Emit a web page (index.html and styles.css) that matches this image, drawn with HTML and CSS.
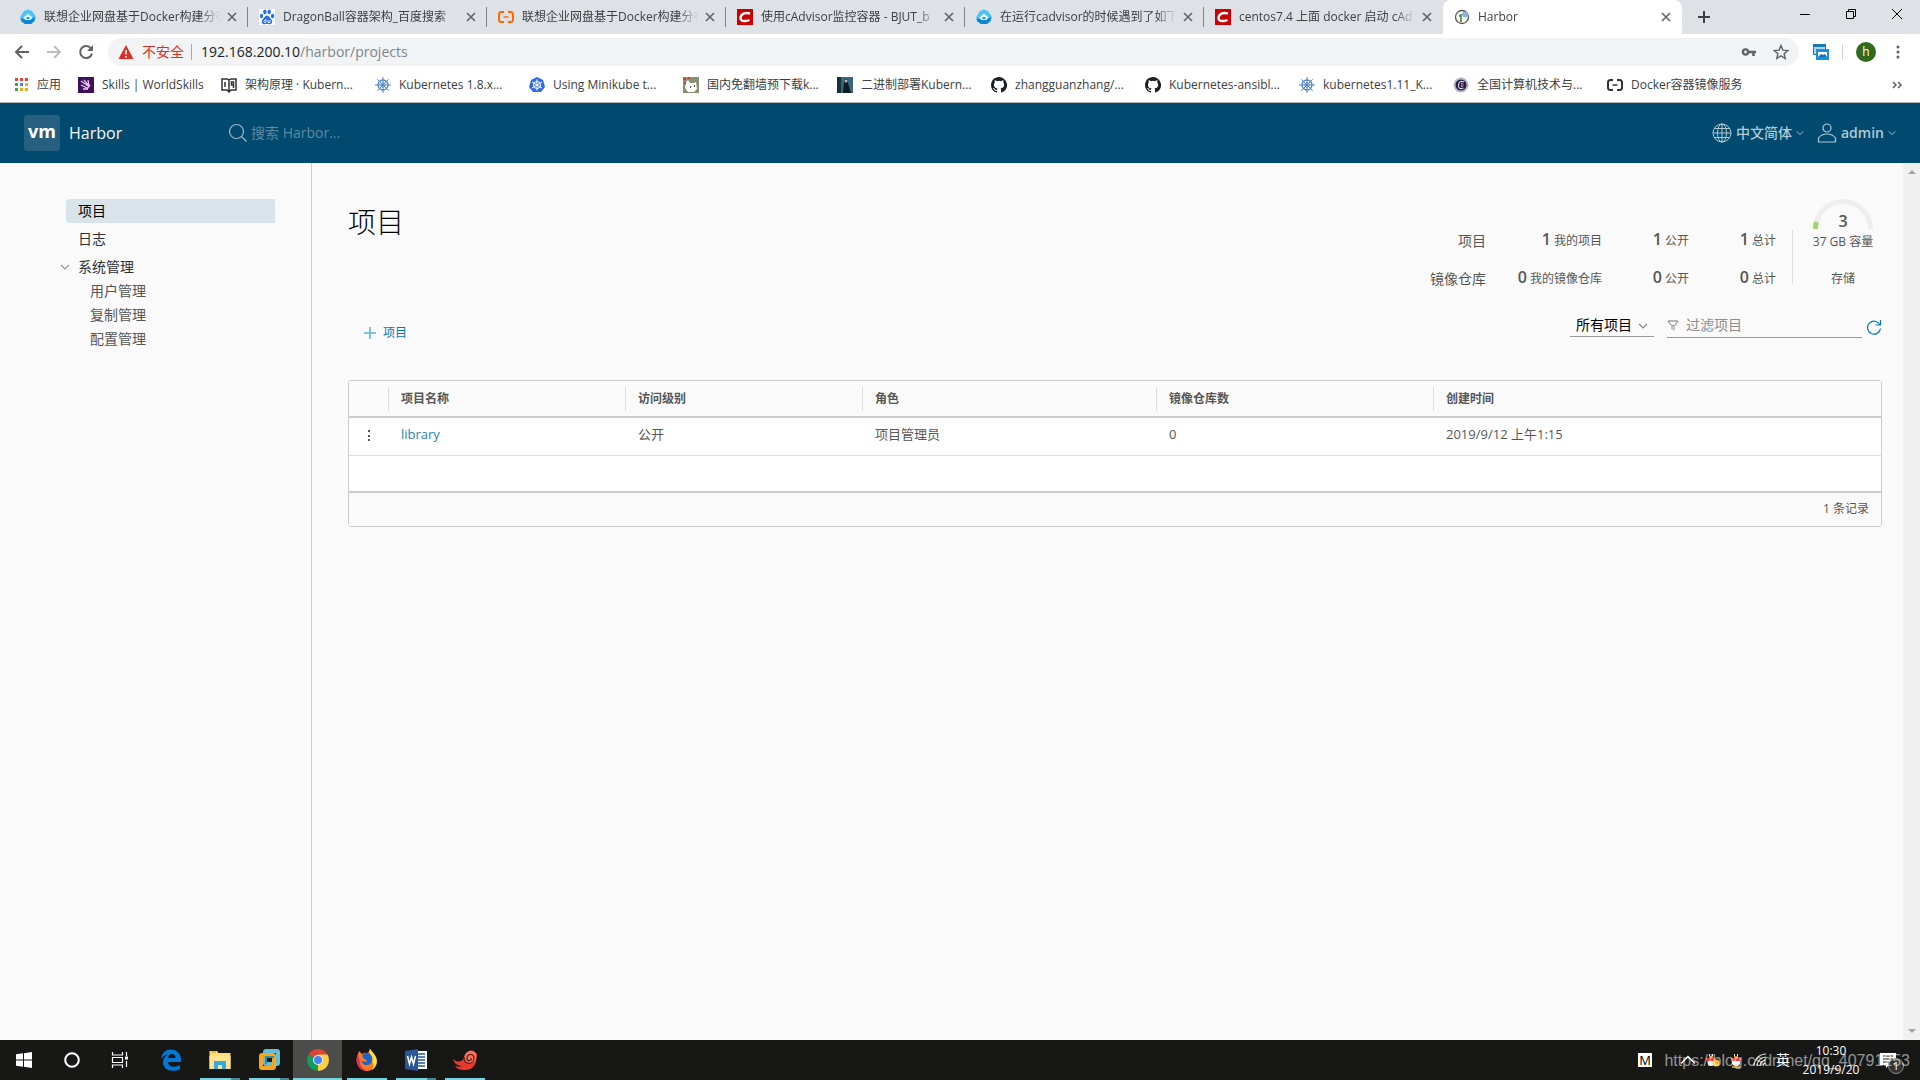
FILE: index.html
```html
<!DOCTYPE html>
<html lang="zh-CN">
<head>
<meta charset="utf-8">
<title>Harbor</title>
<link rel="stylesheet" href="styles.css">
</head>
<body>
<svg class="defs" aria-hidden="true">
  <symbol id="close" viewBox="0 0 16 16"><path d="M4 4l8 8M12 4l-8 8" stroke="#5f6368" stroke-width="1.6" fill="none"/></symbol>
  <symbol id="cloud" viewBox="0 0 16 16"><path d="M8 .5l4 1.500 3.500 5-.5 4-4 4H5l-4-3-.5-4.500L4 2z" fill="#4cc3f2"/><path d="M.5 9q7 3 15-1l-1 4-3.500 3H5l-4-3z" fill="#1286d4"/><path d="M3.500 8.500L8 4.500l4.500 4-2 2.500h-5z" fill="#e4f7ff"/><path d="M6.500 8h3v2h-3z" fill="#1c9be0"/></symbol>
  <symbol id="ali" viewBox="0 0 16 16"><path d="M6 3H3.500Q1 3 1 5.500v5Q1 13 3.500 13H6M10 3h2.500Q15 3 15 5.500v5Q15 13 12.500 13H10" fill="none" stroke="currentColor" stroke-width="2"/><path d="M5.500 8h5" stroke="currentColor" stroke-width="1.500"/></symbol>
  <symbol id="csdn" viewBox="0 0 16 16"><path d="M0 0h16v16H0z" fill="#c00"/><path d="M13 4.500Q10 3.500 7 4.300 3.700 5.500 3.500 9q.2 3.300 4.500 3 2.500 0 4.500-1" fill="none" stroke="#fff" stroke-width="2.400"/></symbol>
  <symbol id="github" viewBox="0 0 16 16"><path fill="#1b1f23" d="M8 0C3.580 0 0 3.580 0 8c0 3.540 2.290 6.530 5.470 7.590.4.070.55-.17.55-.38v-1.490c-2.010.37-2.690-.49-2.690-.94-.09-.23-.48-.94-.82-1.130-.28-.15-.68-.52-.01-.53.63-.01 1.080.58 1.230.82.72 1.210 1.870.87 2.330.66.070-.52.28-.87.51-1.070-1.780-.2-3.640-.89-3.640-3.950 0-.87.31-1.590.82-2.150-.08-.2-.36-1.020.08-2.120 0 0 .67-.21 2.200.82a7.400 7.400 0 0 1 4 0c1.530-1.040 2.200-.82 2.200-.82.44 1.100.16 1.920.08 2.120.51.56.82 1.270.82 2.150 0 3.070-1.870 3.750-3.650 3.950.29.25.54.73.54 1.480v2.200c0 .21.15.46.55.38A8 8 0 0 0 8 0z"/></symbol>
  <symbol id="wheel" viewBox="0 0 16 16"><g fill="none" stroke="#5585c7"><circle cx="8" cy="8" r="5" stroke-width="1.400"/><circle cx="8" cy="8" r="2.200"/><path d="M8 0v16M0 8h16M2.300 2.300l11.400 11.400M13.700 2.300L2.300 13.700"/></g></symbol>
  <symbol id="chev" viewBox="0 0 10 10"><path d="M1 3l4 4 4-4" fill="none" stroke="currentColor" stroke-width="1.200"/></symbol>
</svg>

<header class="browser">
  <nav class="tabs" aria-label="标签页">
    <div class="tab"><svg class="ico"><use href="#cloud"/></svg><span class="tab-title">联想企业网盘基于Docker构建分布</span><button class="tab-close" aria-label="关闭"><svg class="ico"><use href="#close"/></svg></button></div>
    <div class="tab"><svg class="ico" viewBox="0 0 16 16"><path d="M0 0h16v16H0z" fill="#fff"/><g fill="#2a73e8"><ellipse cx="2.500" cy="7" rx="1.700" ry="2.300"/><ellipse cx="5.900" cy="3" rx="1.700" ry="2.400"/><ellipse cx="10.200" cy="3" rx="1.700" ry="2.400"/><ellipse cx="13.600" cy="7" rx="1.700" ry="2.300"/><path d="M8 6.500c2 0 2.500 2 4 3.500 2.500 2.500 1 5.500-1.500 5.300-2-.3-3-.3-5 0C3 15.500 1.500 12.500 4 10c1.500-1.500 2-3.500 4-3.500z"/></g><path d="M6.800 10v3.500H5.500q-1-1 0-2h1.300M9 11v2.500h2V11" fill="none" stroke="#fff" stroke-width=".8"/></svg><span class="tab-title">DragonBall容器架构_百度搜索</span><button class="tab-close" aria-label="关闭"><svg class="ico"><use href="#close"/></svg></button></div>
    <div class="tab"><svg class="ico orange"><use href="#ali"/></svg><span class="tab-title">联想企业网盘基于Docker构建分布</span><button class="tab-close" aria-label="关闭"><svg class="ico"><use href="#close"/></svg></button></div>
    <div class="tab"><svg class="ico"><use href="#csdn"/></svg><span class="tab-title">使用cAdvisor监控容器 - BJUT_b</span><button class="tab-close" aria-label="关闭"><svg class="ico"><use href="#close"/></svg></button></div>
    <div class="tab"><svg class="ico"><use href="#cloud"/></svg><span class="tab-title">在运行cadvisor的时候遇到了如下</span><button class="tab-close" aria-label="关闭"><svg class="ico"><use href="#close"/></svg></button></div>
    <div class="tab last"><svg class="ico"><use href="#csdn"/></svg><span class="tab-title">centos7.4 上面 docker 启动 cAd</span><button class="tab-close" aria-label="关闭"><svg class="ico"><use href="#close"/></svg></button></div>
    <div class="tab active"><svg class="ico" viewBox="0 0 16 16"><circle cx="8" cy="8" r="6.500" fill="#fff" stroke="#555" stroke-width="1.300"/><path d="M5 7h2v6M7 5v1" fill="none" stroke="#5a9a3c" stroke-width="1.800"/><circle cx="11" cy="5.500" r="3" fill="#8db4de"/></svg><span class="tab-title">Harbor</span><button class="tab-close" aria-label="关闭"><svg class="ico"><use href="#close"/></svg></button></div>
    <button class="new-tab" aria-label="新标签页"><svg class="ico" viewBox="0 0 16 16"><path d="M8 2v12M2 8h12" stroke="#3c4043" stroke-width="2"/></svg></button>
    <div class="window-controls">
      <button aria-label="最小化"><svg class="ico" viewBox="0 0 16 16"><path d="M3 8.500h10" stroke="#000"/></svg></button>
      <button aria-label="还原"><svg class="ico" viewBox="0 0 16 16"><path d="M3.500 5.500h7v7h-7zM5.500 5.500v-2h7v7h-2" fill="none" stroke="#000"/></svg></button>
      <button aria-label="关闭窗口"><svg class="ico" viewBox="0 0 16 16"><path d="M3 3l10 10M13 3L3 13" stroke="#000"/></svg></button>
    </div>
  </nav>

  <div class="toolbar">
    <button aria-label="后退"><svg class="ico" viewBox="0 0 16 16"><path d="M15 8H2M8 2L2 8l6 6" fill="none" stroke="#5f6368" stroke-width="2"/></svg></button>
    <button aria-label="前进"><svg class="ico" viewBox="0 0 16 16"><path d="M1 8h13M8 2l6 6-6 6" fill="none" stroke="#babcbe" stroke-width="2"/></svg></button>
    <button aria-label="刷新"><svg class="ico" viewBox="0 0 16 16"><path d="M13 4.500A6 6 0 1 0 14 9.500" fill="none" stroke="#5f6368" stroke-width="2"/><path d="M15 1v6H9z" fill="#5f6368"/></svg></button>
    <div class="omnibox">
      <svg class="ico" viewBox="0 0 16 16"><path d="M8 1l7.500 14H.5z" fill="#d93025"/><path d="M8 6v4.500M8 12v1.500" stroke="#fff" stroke-width="1.500"/></svg>
      <span class="unsafe">不安全</span>
      <span class="url">192.168.200.10<i>/harbor/projects</i></span>
      <button aria-label="密码"><svg class="ico" viewBox="0 0 16 16"><circle cx="4.500" cy="8" r="2.600" fill="none" stroke="#5f6368" stroke-width="2.400"/><path d="M8 8h7M12.500 8v4" stroke="#5f6368" stroke-width="2.600"/></svg></button>
      <button aria-label="收藏"><svg class="ico" viewBox="0 0 16 16"><path d="M8 1.500l1.900 4.600 4.900.4-3.700 3.200 1.100 4.800L8 11.900l-4.200 2.600 1.100-4.800-3.700-3.200 4.900-.4z" fill="none" stroke="#5f6368" stroke-width="1.400"/></svg></button>
    </div>
    <button class="extension" aria-label="扩展程序"><svg class="ico" viewBox="0 0 16 16"><path d="M0 0h13v11H0z" fill="#1b77b7"/><path d="M1 3h11v7H1z" fill="#a9d6ef"/><path d="M3 5h13v11H3z" fill="#1792dc"/><path d="M5 8h9v5H5z" fill="#fff"/><path d="M5 13l3-3 2 1 2-1 2 3z" fill="#0874bd"/></svg></button>
    <button class="avatar" aria-label="用户">h</button>
    <button aria-label="菜单"><svg class="ico" viewBox="0 0 16 16"><g fill="#5f6368"><circle cx="8" cy="3" r="1.500"/><circle cx="8" cy="8" r="1.500"/><circle cx="8" cy="13" r="1.500"/></g></svg></button>
  </div>

  <nav class="bookmarks" aria-label="书签">
    <a href="#" class="apps"><svg class="ico" viewBox="0 0 16 16"><path d="M2 1h3v3H2zM7 1h3v3H7zM12 1h3v3h-3z" fill="#ea4335"/><path d="M2 6h3v3H2zM2 11h3v3H2z" fill="#34a853"/><path d="M7 6h3v3H7z" fill="#4285f4"/><path d="M12 6h3v3h-3zM7 11h3v3H7zM12 11h3v3h-3z" fill="#f9ab00"/></svg><span>应用</span></a>
    <a href="#" class="skills"><svg class="ico" viewBox="0 0 16 16"><path d="M0 0h16v16H0z" fill="#40105c"/><path d="M3 4l7 5M6 3l5 6M10 3l1 6M3 8l6 3M12 8l-3 4M5 12l5 0" stroke="#e7c9f0" stroke-width="1.300"/></svg><span>Skills | WorldSkills</span></a>
    <a href="#"><svg class="ico" viewBox="0 0 16 16"><path d="M1 2h5l2 1 2-1h5v11h-5l-2 2-2-2H1zM8 3v11M4 5v5M10.500 5h2v3h-2zM12.500 8v3" fill="none" stroke="#333" stroke-width="1.500"/></svg><span>架构原理 · Kubern...</span></a>
    <a href="#"><svg class="ico"><use href="#wheel"/></svg><span>Kubernetes 1.8.x...</span></a>
    <a href="#"><svg class="ico" viewBox="0 0 16 16"><path d="M8 0l6 3 2 7-4 5H4L0 10l2-7z" fill="#326ce5"/><g fill="none" stroke="#fff"><circle cx="8" cy="8" r="3.500"/><path d="M8 2.500v11M3 5l10 6M13 5L3 11"/></g></svg><span>Using Minikube t...</span></a>
    <a href="#"><svg class="ico" viewBox="0 0 16 16"><path d="M0 0h16v16H0z" fill="#8a8f73"/><path d="M3 5l2-2 2 3h4l2-1 1 7-3 3H5l-3-4z" fill="#fff"/><path d="M0 1h3v2H0zM5 0h2v2H5zM1 5h2v2H1z" fill="#d2383b"/><path d="M7 10h1M11 9h1" stroke="#322" stroke-width="1.500"/></svg><span>国内免翻墙预下载k...</span></a>
    <a href="#"><svg class="ico" viewBox="0 0 16 16"><path d="M0 0h16v16H0z" fill="#38677c"/><path d="M0 0h4v16H0z" fill="#16323f"/><path d="M6 16L7 6l1-4h2l1 4 3 10z" fill="#101c25"/><circle cx="9" cy="4" r="1.500" fill="#c9b3a0"/></svg><span>二进制部署Kubern...</span></a>
    <a href="#"><svg class="ico"><use href="#github"/></svg><span>zhangguanzhang/...</span></a>
    <a href="#"><svg class="ico"><use href="#github"/></svg><span>Kubernetes-ansibl...</span></a>
    <a href="#"><svg class="ico"><use href="#wheel"/></svg><span>kubernetes1.11_K...</span></a>
    <a href="#"><svg class="ico" viewBox="0 0 16 16"><circle cx="8" cy="8" r="7.500" fill="#b9b8c8"/><circle cx="8" cy="8" r="5.500" fill="#242147"/><path d="M11 5Q6 3 5.500 8t5 3M9 6v4" fill="none" stroke="#d4d3e2" stroke-width="1.200"/><path d="M9 7h2v2H9z" fill="#b33"/></svg><span>全国计算机技术与...</span></a>
    <a href="#"><svg class="ico dark"><use href="#ali"/></svg><span>Docker容器镜像服务</span></a>
    <button class="more" aria-label="更多书签"><svg class="ico" viewBox="0 0 16 16"><path d="M4 5l3 3-3 3M9 5l3 3-3 3" fill="none" stroke="#5f6368" stroke-width="1.600"/></svg></button>
  </nav>
</header>

<header class="app-header">
  <a href="#" class="brand"><span class="logo">vm</span><span>Harbor</span></a>
  <label class="search"><svg class="ico20" viewBox="0 0 20 20"><g fill="none" stroke="#99b7c6" stroke-width="1.200"><circle cx="8.500" cy="8.500" r="7"/><path d="M13.500 13.500l5 5"/></g></svg><input type="text" placeholder="搜索 Harbor..." aria-label="搜索"></label>
  <button class="head-menu"><svg class="ico20" viewBox="0 0 20 20"><g fill="none" stroke="currentColor"><circle cx="10" cy="10" r="9"/><ellipse cx="10" cy="10" rx="4.500" ry="9"/><path d="M10 1v18M1 10h18M2.500 5.500h15M2.500 14.500h15"/></g></svg><span class="medium">中文简体</span><svg class="caret"><use href="#chev"/></svg></button>
  <button class="head-menu"><svg class="ico20" viewBox="0 0 20 20"><g fill="none" stroke="currentColor" stroke-width="1.200"><circle cx="10" cy="5" r="4"/><path d="M1.500 19v-4q3-4 8.500-4t8.500 4v4z"/></g></svg><span>admin</span><svg class="caret"><use href="#chev"/></svg></button>
</header>

<div class="workspace">
  <nav class="side">
    <a href="#" class="side-link current">项目</a>
    <a href="#" class="side-link">日志</a>
    <button class="side-group"><svg class="caret"><use href="#chev"/></svg>系统管理</button>
    <a href="#" class="side-sub">用户管理</a>
    <a href="#" class="side-sub">复制管理</a>
    <a href="#" class="side-sub">配置管理</a>
  </nav>

  <main class="content">
    <div class="overview">
      <h1>项目</h1>
      <dl class="stats">
        <dt>项目</dt><dd><b>1</b> 我的项目</dd><dd><b>1</b> 公开</dd><dd><b>1</b> 总计</dd>
        <dt>镜像仓库</dt><dd><b>0</b> 我的镜像仓库</dd><dd><b>0</b> 公开</dd><dd><b>0</b> 总计</dd>
      </dl>
      <div class="divider"></div>
      <div class="storage">
        <div class="gauge"><svg viewBox="0 0 60 30"><path d="M2.500 30a27.500 27.500 0 0 1 55 0" fill="none" stroke="#eee" stroke-width="5"/><path d="M2.500 30q0-4 1-7" fill="none" stroke="#a5d46f" stroke-width="5"/></svg><b>3</b></div>
        <span>37 GB 容量</span>
        <span class="storage-name">存储</span>
      </div>
    </div>

    <div class="actions">
      <button class="create"><svg class="plus" viewBox="0 0 12 12"><path d="M6 0v12M0 6h12" stroke="#5fb0d8" stroke-width="1.500"/></svg>项目</button>
      <div class="select-wrap"><select aria-label="项目类型"><option>所有项目</option></select><svg class="caret"><use href="#chev"/></svg></div>
      <label class="filter"><svg class="funnel" viewBox="0 0 12 12"><path d="M1 2h10L7.500 6.500h-3z" fill="none" stroke="#777"/><path d="M4 6.500h4v5H6.500L4 10z" fill="#c4c4c4"/></svg><input type="text" placeholder="过滤项目" aria-label="过滤项目"></label>
      <button class="refresh" aria-label="刷新"><svg class="ico" viewBox="0 0 16 16"><path d="M14 6A6.500 6.500 0 1 0 14.500 9.500M14.500 1v5h-5" fill="none" stroke="#0079b8" stroke-width="1.200"/></svg></button>
    </div>

    <div class="grid">
      <table>
        <colgroup><col class="c-menu"><col class="c-name"><col class="c-access"><col class="c-role"><col class="c-repos"><col></colgroup>
        <thead><tr><th aria-label="操作"></th><th><span>项目名称</span></th><th><span>访问级别</span></th><th><span>角色</span></th><th><span>镜像仓库数</span></th><th><span>创建时间</span></th></tr></thead>
        <tbody><tr><td><button class="row-menu" aria-label="操作"><svg class="ico" viewBox="0 0 16 16"><path d="M6 4h2v2H6zM6 9h2v2H6zM6 13h2v2H6z" fill="#565656"/></svg></button></td><td><a href="#">library</a></td><td>公开</td><td>项目管理员</td><td>0</td><td>2019/9/12 上午1:15</td></tr></tbody>
      </table>
      <div class="grid-foot">1 条记录</div>
    </div>
  </main>
  <div class="scrollbar" aria-hidden="true"><svg viewBox="0 0 8 8"><path d="M0 6l4-4 4 4z" fill="#a3a3a3"/></svg><svg viewBox="0 0 8 8"><path d="M0 2l4 4 4-4z" fill="#a3a3a3"/></svg></div>
</div>

<footer class="taskbar">
  <button aria-label="开始"><svg viewBox="0 0 24 24"><path d="M4 6.300l7-1v6.200H4zM12 5.200L20 4v7.500h-8zM4 12.500h7v6.200l-7-1zM12 12.500h8V20l-8-1.200z" fill="#fff"/></svg></button>
  <button aria-label="搜索"><svg viewBox="0 0 24 24"><circle cx="12" cy="12" r="6.800" fill="none" stroke="#fff" stroke-width="2"/></svg></button>
  <button aria-label="任务视图"><svg viewBox="0 0 24 24"><path d="M4.500 4v3h10V4M4.500 20v-3h10v3M4.500 9.500h10v5h-10zM18.500 4v4M18.500 13v6" fill="none" stroke="#fff" stroke-width="1.200"/><path d="M17 8.500h3v3h-3z" fill="#fff"/></svg></button>
  <button class="pinned" aria-label="Edge"><svg viewBox="0 0 24 24"><path d="M2 11C3 4.500 7 1.500 12 1.500c6 0 10 4.500 10 10V14H9c0 3 2.500 4.800 6 4.800 2.200 0 4.200-.6 6-1.700v4.200c-2 1-4.300 1.500-7 1.500-6 0-10-3.300-10-8.500 0-3.600 2-6.500 5.500-8C6 6.700 3.500 8.300 2 11zm7-1h7.500c0-2.700-1.300-4-3.500-4s-3.600 1.500-4 4z" fill="#0078d7"/></svg></button>
  <button class="pinned running multi" aria-label="文件资源管理器"><svg viewBox="0 0 24 24"><path d="M1.500 3H9l1.500 2h12v16h-21z" fill="#fddc7b"/><path d="M3 4h5" stroke="#f5a623" stroke-width="1.500"/><path d="M1.500 8h21v13h-21z" fill="#ffe592"/><path d="M6 21v-8h12v8h-4v-4h-4v4z" fill="#38a9e0"/></svg></button>
  <button class="pinned running multi" aria-label="VMware"><svg viewBox="0 0 24 24"><g fill="none" stroke-width="4"><rect x="8" y="3" width="13" height="13" rx="1" stroke="#62bfd5"/><rect x="4" y="7" width="13" height="13" rx="1" stroke="#f5a623"/></g><path d="M9 16V9h8" fill="none" stroke="#278da8" stroke-width="2"/></svg></button>
  <button class="pinned running selected" aria-label="Chrome"><svg viewBox="0 0 24 24"><path d="M12 12L2.500 6.500A11 11 0 0 1 21.500 6.500z" fill="#db4437"/><path d="M12 12L2.500 6.500A11 11 0 0 0 12 23l5-8z" fill="#0f9d58"/><path d="M12 12l0 11A11 11 0 0 0 21.500 6.500H12z" fill="#ffcd40"/><circle cx="12" cy="12" r="5" fill="#f1f1f1"/><circle cx="12" cy="12" r="4" fill="#4285f4"/></svg></button>
  <button class="pinned running" aria-label="Firefox"><svg viewBox="0 0 24 24"><path d="M15 1l4 5c6 7 1 17-7 17C4 23-1 14 3 6l1-3 3 3q3-2 6-1z" fill="#ff7a18"/><path d="M15 1l4 5c5 6 3 13-2 16 3-5 0-9-1-12-2-3-2-5-1-9z" fill="#ffdf32"/><path d="M3 6C-1 14 4 23 12 23c-4-2-7-5-7-9z" fill="#ed2962"/><path d="M7 8c2-4 7-4 9-1 3 4 1 10-4 10-4 0-5-2-5-4l4 1 1-2-3-1z" fill="#1d63cf"/></svg></button>
  <button class="pinned running multi" aria-label="Word"><svg viewBox="0 0 24 24"><path d="M11 3h12v18H11z" fill="#fff"/><path d="M14 6h7M14 9h7M14 12h7M14 15h7M14 18h7" stroke="#2b579a" stroke-width="1.300"/><path d="M1 3l13-2v22L1 21z" fill="#2b579a"/><path d="M3.500 8l2 8 2-7 2 7 2-8" fill="none" stroke="#fff" stroke-width="1.500"/></svg></button>
  <button class="pinned running" aria-label="终端"><svg viewBox="0 0 24 24"><path d="M0 11c5 4 9 3 11-1 1-6 5-8 9-7 3 1 4 4 4 2 0 12-4 17-12 17-5 0-8-1-10-4 3 1 5 1 7 0-5 0-8-3-9-7z" fill="#e8392f"/><path d="M11 10c1-6 5-8 9-7 4 2 4 6 2 10-4 4-10 2-11-3z" fill="#f0745c"/><path d="M11 9c0 8 9 8 10 2 1-6-8-6-7 0 1 3 5 2 4-1" fill="none" stroke="#5a1a16" stroke-width="1.200"/></svg></button>
  <div class="tray">
    <span class="ime">M</span>
    <svg class="tray-up" viewBox="0 0 14 14"><path d="M1 10l6-6 6 6" fill="none" stroke="#fff" stroke-width="1.300"/></svg>
    <svg viewBox="0 0 16 16"><ellipse cx="7" cy="8" rx="5" ry="7" fill="#111"/><ellipse cx="7" cy="10" rx="3.500" ry="4" fill="#fff"/><path d="M2 6h9v3H2z" fill="#e33"/><path d="M5 3h1M8 3h1" stroke="#fff" stroke-width="2"/><path d="M5 5h4" stroke="#fb3" stroke-width="1.500"/><circle cx="12" cy="11" r="3.500" fill="#f9b72c"/></svg>
    <svg viewBox="0 0 16 16"><ellipse cx="8" cy="8" rx="5" ry="7" fill="#111"/><ellipse cx="8" cy="10" rx="4" ry="4" fill="#fff"/><path d="M3 6h10v3H3z" fill="#e33"/><path d="M6 3h1M9 3h1" stroke="#fff" stroke-width="2"/><path d="M6 5h4M4 15h8" stroke="#fb3" stroke-width="1.500"/></svg>
    <svg viewBox="0 0 16 16"><path d="M2 14A12 12 0 0 1 14 2M5 14a9 9 0 0 1 9-9M8 14a6 6 0 0 1 6-6M11 14a3 3 0 0 1 3-3" fill="none" stroke="#ddd" stroke-width="1.200"/></svg>
    <span class="lang">英</span>
    <span class="clock"><span>10:30</span><span>2019/9/20</span></span>
    <span class="notice"><svg viewBox="0 0 16 16"><path d="M0 1h16v12H9l-3 3v-3H0z" fill="#fff"/><path d="M3 4h10M3 7h10M3 10h6" stroke="#151515"/></svg><span class="badge">1</span></span>
  </div>
  <span class="watermark">https://blog.csdn.net/qq_40791253</span>
</footer>
</body>
</html>
```
FILE: styles.css
```css
* { box-sizing: border-box; }
html, body { height: 100%; }
body {
  margin: 0;
  display: flex;
  flex-direction: column;
  overflow: hidden;
  background: #fafafa;
  color: #565656;
  font: 14px/24px "Open Sans", "Noto Sans CJK SC", sans-serif;
}
button, input, select { font: inherit; color: inherit; border: 0; background: none; padding: 0; margin: 0; outline: 0; }
button { display: flex; align-items: center; justify-content: center; white-space: nowrap; }
a { color: inherit; text-decoration: none; }
svg { display: block; flex: none; }
.defs { width: 0; height: 0; position: absolute; }
.ico { width: 16px; height: 16px; }
.ico20 { width: 20px; height: 20px; }
.caret { width: 10px; height: 10px; }
.orange { color: #ff6a00; }
.dark { color: #333; }

/* Browser chrome */
.browser { background: #fff; border-bottom: 1px solid #b6b4b2; color: #3c4043; font-size: 12px; line-height: 16px; }
.tabs { display: flex; height: 34px; background: #dee1e6; padding-left: 9px; }
.tab { display: flex; align-items: center; width: 239px; padding: 0 8px 0 11px; position: relative; }
.tab:not(.last):not(.active)::after { content: ""; position: absolute; right: 0; top: 7px; width: 1px; height: 20px; background: #808387; }
.tab-title { flex: 1; min-width: 0; margin: 0 4px 0 8px; overflow: hidden; white-space: nowrap; -webkit-mask-image: linear-gradient(90deg, #000 calc(100% - 20px), transparent); mask-image: linear-gradient(90deg, #000 calc(100% - 20px), transparent); }
.tab.active { background: #fff; border-radius: 8px 8px 0 0; }
.new-tab { width: 44px; }
.window-controls { display: flex; margin-left: auto; height: 28px; }
.window-controls button { width: 46px; }
.toolbar { display: flex; align-items: center; height: 36px; padding: 0 6px; }
.toolbar > button { width: 32px; height: 28px; }
.omnibox { flex: 1; display: flex; align-items: center; height: 28px; margin: 0 6px; padding: 0 2px 0 10px; border-radius: 14px; background: #f1f3f4; font-size: 14px; }
.unsafe { color: #d93025; margin: 0 7px 0 8px; }
.url { flex: 1; padding-left: 9px; border-left: 1px solid #a5a8ab; color: #202124; }
.url i { font-style: normal; color: #80868b; }
.omnibox button { width: 32px; height: 28px; }
.toolbar .extension { border-right: 1px solid #cfd1d4; width: 38px; height: 16px; padding-right: 6px; }
.toolbar .avatar { width: 20px; height: 20px; margin: 0 6px 0 13px; border-radius: 50%; background: #33691e; color: #fff; }
.bookmarks { display: flex; align-items: center; height: 32px; padding: 0 0 2px 13px; }
.bookmarks a { display: flex; align-items: center; gap: 8px; width: 154px; white-space: nowrap; }
.bookmarks .apps { width: 65px; }
.bookmarks .skills { width: 143px; }
.more { margin-left: auto; width: 46px; }

/* Application header */
.app-header { display: flex; align-items: center; height: 60px; flex: none; padding: 0 24px; background: #004a70; color: #b3c9d4; }
.brand { display: flex; align-items: center; gap: 9px; width: 204px; color: #fafafa; font-size: 16px; }
.logo { width: 36px; height: 36px; border-radius: 3px; background: #265f80; font: bold 18px/32px "Open Sans", sans-serif; text-align: center; color: #fff; }
.search { flex: 1; display: flex; align-items: center; gap: 3px; }
.search input { width: 200px; }
.search input::placeholder { color: #5d8aa2; opacity: 1; }
.head-menu { gap: 4px; margin-left: 13px; font-weight: 600; }
.head-menu .caret { width: 8px; height: 8px; }
.medium { font-weight: 500; }

/* Page body */
.workspace { flex: 1; display: flex; min-height: 0; }
.side { width: 312px; flex: none; padding: 36px 36px 0 60px; border-right: 1px solid #ccc; }
.side-link, .side-sub { display: block; padding-left: 18px; }
.side-link { margin: 0 0 4px 6px; padding-left: 12px; color: #313131; }
.side-link.current { background: #d9e4ea; border-radius: 3px 0 0 3px; color: #000; }
.side-group { gap: 8px; color: #313131; }
.side-group .caret { color: #9a9a9a; }
.side-sub { padding-left: 30px; }
.content { flex: 1; min-width: 0; padding: 36px 21px 0 36px; }
.overview { display: flex; align-items: flex-start; height: 112px; }
h1 { flex: 1; margin: 0; font-size: 28px; font-weight: 300; line-height: 46px; color: #000; }
.stats { display: grid; grid-template-columns: auto 116px 87px 87px; grid-template-rows: 38px 38px; margin: 22px 16px 0 0; text-align: right; font-size: 12px; }
.stats dt { font-size: 14px; line-height: 40px; }
.stats dd { margin: 0; line-height: 36px; }
.stats b, .gauge b { font-size: 16px; font-weight: 600; }
.divider { width: 1px; height: 54px; margin-top: 31px; background: #ddd; }
.storage { display: flex; flex-direction: column; align-items: center; width: 78px; margin-left: 11px; font-size: 12px; line-height: 24px; }
.gauge { position: relative; width: 60px; height: 31px; }
.gauge svg { width: 60px; height: 30px; }
.gauge b { position: absolute; inset: 10px 0 0; text-align: center; }
.storage-name { margin-top: 13px; }
.actions { display: flex; align-items: flex-start; height: 60px; padding-top: 2px; }
.create { gap: 7px; margin: 8px auto 0 16px; height: 24px; color: #0079b8; font-size: 12px; }
.plus { width: 12px; height: 12px; }
.select-wrap { position: relative; width: 84px; }
.select-wrap select { appearance: none; width: 84px; height: 24px; padding-left: 6px; border-bottom: 1px solid #999; color: #000; }
.select-wrap .caret { position: absolute; right: 6px; top: 8px; color: #888; pointer-events: none; }
.filter { display: flex; align-items: center; gap: 7px; width: 195px; height: 25px; margin-left: 13px; border-bottom: 1px solid #999; }
.filter input { width: 160px; }
.filter input::placeholder { color: #8c8c8c; opacity: 1; }
.funnel { width: 12px; height: 12px; }
.refresh { width: 16px; height: 24px; margin: 2px 0 0 4px; }

/* Data grid */
.grid { margin-top: 9px; border: 1px solid #ccc; border-radius: 3px; background: #fff; }
table { width: 100%; border-collapse: collapse; table-layout: fixed; }
.c-menu { width: 39px; }
.c-name, .c-access { width: 237px; }
.c-role { width: 294px; }
.c-repos { width: 277px; }
th { height: 36px; padding: 0; text-align: left; font-size: 12px; font-weight: 600; background: #fafafa; border-bottom: 2px solid #ccc; }
th span { display: block; padding-left: 12px; border-left: 1px solid #ddd; }
td { height: 38px; padding: 0 0 5px 13px; border-bottom: 1px solid #ddd; font-size: 13px; }
td a { color: #2b7fb8; }
.row-menu { width: 16px; height: 24px; }
.grid-foot { margin-top: 35px; height: 35px; padding-right: 12px; border-top: 2px solid #ccc; background: #fafafa; text-align: right; font-size: 12px; line-height: 32px; }
.scrollbar { width: 17px; display: flex; flex-direction: column; justify-content: space-between; align-items: center; padding: 5px 0; background: #f0f0f0; }
.scrollbar svg { width: 8px; height: 8px; }

/* Desktop taskbar */
.taskbar { position: relative; display: flex; height: 40px; flex: none; background: #171716; color: #fff; }
.taskbar button { width: 48px; height: 40px; }
.taskbar button svg { width: 24px; height: 24px; }
.taskbar .pinned { position: relative; width: 49px; }
.taskbar .pinned:nth-child(4) { margin-left: 2px; }
.running::after { content: ""; position: absolute; left: 5px; right: 4px; bottom: 0; height: 2px; background: #76d5e0; }
.multi::after { border-right: 9px solid #4a8990; }
.selected { background: #4c4c4b; }
.selected::after { left: 0; right: 0; }
.tray { display: flex; align-items: center; margin-left: auto; padding-right: 24px; }
.tray svg { width: 16px; height: 16px; margin-right: 8px; }
.ime { width: 14px; height: 14px; margin-right: 28px; background: #fff; color: #000; font-size: 13px; line-height: 14px; text-align: center; }
.lang { width: 14px; margin-right: 10px; }
.clock { display: flex; flex-direction: column; width: 62px; margin-right: 18px; text-align: center; font-size: 12px; line-height: 19px; }
.notice { position: relative; }
.tray .notice svg { margin: 0; }
.badge { position: absolute; left: 8px; top: 6px; width: 16px; height: 16px; border: 1px solid #888; border-radius: 50%; background: #333; font-size: 11px; line-height: 14px; text-align: center; }
.watermark { position: absolute; right: 10px; top: 9px; color: rgba(255, 255, 255, .55); font: 16px/24px "Liberation Sans", sans-serif; }
```
